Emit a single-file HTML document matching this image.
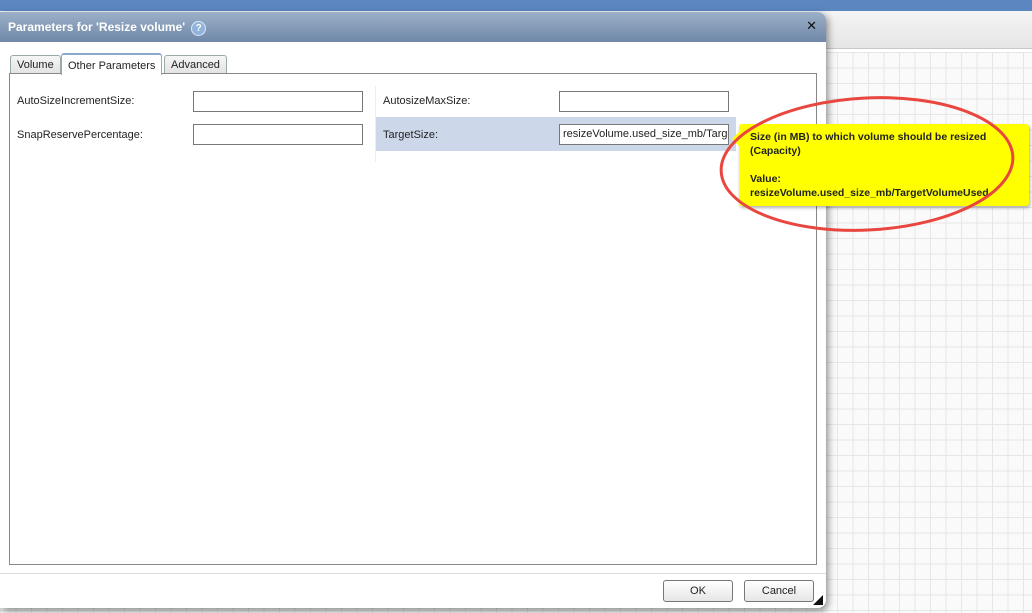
<!DOCTYPE html>
<html><head><style>
body{margin:0;width:1032px;height:613px;overflow:hidden;position:relative;font-family:"Liberation Sans","DejaVu Sans",sans-serif;font-size:11px;color:#222;
background:#fff;}
.top{position:absolute;left:0;top:0;width:1032px;height:11px;background:#5b86c0;}
.tb{position:absolute;left:0;top:11px;width:1032px;height:37px;background:linear-gradient(#f4f4f4,#e6e6e6);border-bottom:1px solid #c8c8c8;}
.grid{position:absolute;left:0;top:52px;width:1032px;height:561px;background-color:#fafafa;
background-image:linear-gradient(#e6e6e6 1px,transparent 1px),linear-gradient(90deg,#e6e6e6 1px,transparent 1px);background-size:15.5px 15.5px;}
.dlg{position:absolute;left:0;top:12px;width:826px;height:596px;background:#fff;border-radius:0 8px 8px 0;box-shadow:2px 3px 8px rgba(0,0,0,.45);overflow:hidden;}
.title{height:30px;background:linear-gradient(#9cb0c8,#6f88a8);color:#fff;font-weight:bold;font-size:12px;line-height:30px;padding-left:8px;border-radius:0 8px 0 0;}
.q{display:inline-block;width:13px;height:13px;border-radius:50%;background:#8fb3dd;border:1px solid #dce8f5;color:#fff;font-size:10px;line-height:13px;text-align:center;margin-left:6px;vertical-align:0px;}
.x{position:absolute;right:9px;top:6px;color:#111;font-weight:bold;font-size:13px;}
.tab{position:absolute;top:43px;height:18px;border:1px solid #9aa;border-bottom:none;background:linear-gradient(#f6f6f6,#e2e2e2);line-height:18px;padding:0 6px;border-radius:3px 3px 0 0;}
.tab.a{background:#fff;border-top:2px solid #8ac;top:41px;height:20px;line-height:22px;z-index:2;}
.panel{position:absolute;left:9px;top:61px;width:806px;height:490px;border:1px solid #888;}
.lbl{position:absolute;}
.in{position:absolute;width:170px;height:21px;border:1px solid #777;background:#fff;box-sizing:border-box;font-size:11px;line-height:19px;padding-left:3px;white-space:nowrap;overflow:hidden;}
.sel{position:absolute;left:376px;top:105px;width:360px;height:34px;background:#ccd8ea;}
.sep{position:absolute;left:375px;top:74px;width:1px;height:76px;background:#eee;}
.foot{position:absolute;left:0;top:561px;width:826px;height:1px;background:#ddd;}
.btn{position:absolute;top:568px;width:68px;height:20px;border:1px solid #777;border-radius:3px;background:linear-gradient(#fff,#e6e6e6);text-align:center;line-height:20px;}
.tip{position:absolute;left:739px;top:124px;width:290px;height:82px;background:#ffff00;border-radius:3px;box-shadow:1px 2px 3px rgba(0,0,0,.3);font-weight:bold;font-size:10.5px;line-height:14px;padding:6px 0 0 11px;box-sizing:border-box;}
.tip:before{content:"";position:absolute;left:-7px;top:8px;border:7px solid transparent;border-left:0;border-right-color:#ffff00;}
</style></head><body>
<div class="top"></div><div class="tb"></div><div class="grid"></div>
<div class="dlg">
<div class="title">Parameters for 'Resize volume'<span class="q">?</span></div>
<div class="x">✕</div>
<div class="tab" style="left:10px">Volume</div>
<div class="tab a" style="left:61px">Other Parameters</div>
<div class="tab" style="left:164px">Advanced</div>
<div class="panel"></div>
<div class="sel"></div><div class="sep"></div>
<div class="lbl" style="left:17px;top:83px">AutoSizeIncrementSize:</div>
<div class="in" style="left:193px;top:79px"></div>
<div class="lbl" style="left:17px;top:117px">SnapReservePercentage:</div>
<div class="in" style="left:193px;top:112px"></div>
<div class="lbl" style="left:383px;top:83px">AutosizeMaxSize:</div>
<div class="in" style="left:559px;top:79px"></div>
<div class="lbl" style="left:383px;top:117px">TargetSize:</div>
<div class="in" style="left:559px;top:112px">resizeVolume.used_size_mb/TargetVolumeUsed</div>
<div class="foot"></div>
<div class="btn" style="left:663px">OK</div>
<div class="btn" style="left:744px">Cancel</div>
<div style="position:absolute;left:813px;top:583px;border:5px solid transparent;border-right-color:#111;border-bottom-color:#111"></div>
</div>
<div class="tip">Size (in MB) to which volume should be resized<br>(Capacity)<br><br>Value:<br>resizeVolume.used_size_mb/TargetVolumeUsed</div>
<svg style="position:absolute;left:0;top:0" width="1032" height="613"><ellipse cx="867" cy="164" rx="146" ry="66" fill="none" stroke="#e8463e" stroke-width="3" transform="rotate(-3 867 164)"/></svg>
</body></html>
